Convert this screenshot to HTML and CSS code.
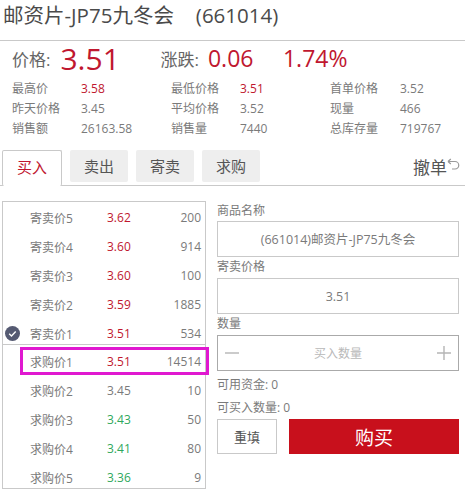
FILE: index.html
```html
<!doctype html>
<html lang="zh-CN">
 <head>
  <meta charset="UTF-8">
  <title>邮资片-JP75九冬会</title>
  <link rel="stylesheet" href="styles.css">
 </head>
 <body>
  <h1 class="title">邮资片-JP75九冬会 &nbsp; (661014)</h1>
  <div class="price-row">
   <span class="price-label">价格:</span>
   <span class="price-now">3.51</span>
   <span class="change-label">涨跌:</span>
   <span class="change-val">0.06</span>
   <span class="change-pct">1.74%</span>
  </div>
  <div class="stats">
   <span>最高价</span><span class="up">3.58</span>
   <span>最低价格</span><span class="up">3.51</span>
   <span>首单价格</span><span>3.52</span>
   <span>昨天价格</span><span>3.45</span>
   <span>平均价格</span><span>3.52</span>
   <span>现量</span><span>466</span>
   <span>销售额</span><span>26163.58</span>
   <span>销售量</span><span>7440</span>
   <span>总库存量</span><span>719767</span>
  </div>
  <div class="tabs">
   <a class="tab active">买入</a>
   <a class="tab">卖出</a>
   <a class="tab">寄卖</a>
   <a class="tab">求购</a>
   <a class="cancel">撤单<svg class="undo" width="13" height="13" viewBox="0 0 13 13"><path d="M1 3.5h7a3.6 3.6 0 0 1 0 7.5H5M1 3.5L3.8 1M1 3.5L3.8 6" fill="none" stroke="#999" stroke-width="1.2"/></svg></a>
  </div>
  <div class="trade">
   <div class="book">
    <div class="book-part sell">
     <div class="row"><span>寄卖价5</span><span class="up">3.62</span><span>200</span></div>
     <div class="row"><span>寄卖价4</span><span class="up">3.60</span><span>914</span></div>
     <div class="row"><span>寄卖价3</span><span class="up">3.60</span><span>100</span></div>
     <div class="row"><span>寄卖价2</span><span class="up">3.59</span><span>1885</span></div>
     <div class="row">
      <svg class="check" width="15" height="15" viewBox="0 0 15 15"><circle cx="7.5" cy="7.5" r="7.5" fill="#555a72"/><path d="M4.2 7.8l2.3 2.2 4.2-4.4" fill="none" stroke="#fff" stroke-width="1.4"/></svg>
      <span>寄卖价1</span><span class="up">3.51</span><span>534</span>
     </div>
    </div>
    <div class="book-part">
     <div class="row picked"><span>求购价1</span><span class="up">3.51</span><span>14514</span></div>
     <div class="row"><span>求购价2</span><span>3.45</span><span>10</span></div>
     <div class="row"><span>求购价3</span><span class="down">3.43</span><span>50</span></div>
     <div class="row"><span>求购价4</span><span class="down">3.41</span><span>80</span></div>
     <div class="row"><span>求购价5</span><span class="down">3.36</span><span>9</span></div>
    </div>
   </div>
   <form class="order">
    <label class="field-label">商品名称</label>
    <div class="field">(661014)邮资片-JP75九冬会</div>
    <label class="field-label">寄卖价格</label>
    <div class="field">3.51</div>
    <label class="field-label">数量</label>
    <div class="field qty">
     <svg width="14" height="14" viewBox="0 0 14 14"><path d="M0 7h14" stroke="#b5b5b5" stroke-width="1.4"/></svg>
     <span class="placeholder">买入数量</span>
     <svg width="14" height="14" viewBox="0 0 14 14"><path d="M0 7h14M7 0v14" stroke="#b5b5b5" stroke-width="1.4"/></svg>
    </div>
    <p class="info">可用资金: 0</p>
    <p class="info second">可买入数量: 0</p>
    <div class="actions">
     <button type="button" class="btn-reset">重填</button>
     <button type="button" class="btn-buy">购买</button>
    </div>
   </form>
  </div>
 </body>
</html>
```

FILE: styles.css
```css
:root {
  --red: #c0172f;
  --green: #2fa85c;
  --text: #7a7a7a;
  --line: #c9c9c9;
}

* {
  box-sizing: border-box;
}

body {
  margin: 0;
  font-family: "Open Sans", "Noto Sans CJK SC", sans-serif;
  color: var(--text);
  background: #fff;
  overflow: hidden;
}

.title {
  margin: 0;
  height: 41px;
  padding: 0 0 0 3px;
  border-bottom: 1px solid var(--line);
  font-size: 20.5px;
  font-weight: 400;
  word-spacing: 2px;
  line-height: 31px;
  color: #4a4a4a;
}

.price-row {
  display: flex;
  align-items: center;
  height: 34px;
  padding-left: 12px;
  color: #666;
  font-size: 17px;
}

.price-now {
  width: 100px;
  margin-left: 10px;
  font-size: 30px;
  color: var(--red);
}

.change-val,
.change-pct {
  font-size: 23px;
  color: var(--red);
}

.change-val {
  width: 75px;
  margin-left: 9px;
}

.stats {
  display: grid;
  grid-template-columns: 69px 90px 69px 90px 70px 1fr;
  grid-auto-rows: 20px;
  align-items: center;
  margin-top: 3px;
  padding-left: 12px;
  font-size: 12px;
}

.up {
  color: var(--red);
}

.down {
  color: var(--green);
}

.tabs {
  display: flex;
  align-items: flex-start;
  gap: 8px;
  height: 36px;
  margin-top: 12px;
  padding-left: 2px;
  border-bottom: 1px solid var(--line);
}

.tab {
  width: 58px;
  height: 32px;
  border-radius: 2px;
  background: #eee;
  color: #555;
  font-size: 15px;
  line-height: 33px;
  text-align: center;
}

.tab.active {
  width: 60px;
  height: 36px;
  background: #fff;
  border: 1px solid var(--line);
  border-bottom: 0;
  color: var(--red);
}

.cancel {
  display: flex;
  align-items: center;
  gap: 0;
  height: 32px;
  margin-left: auto;
  padding-right: 5px;
  color: #555;
  font-size: 17px;
}

.undo {
  margin-top: -4px;
}

.trade {
  display: flex;
  align-items: flex-start;
  gap: 11px;
  margin-top: 15px;
  padding-left: 2px;
}

.book {
  width: 204px;
  height: 288px;
  border: 1px solid var(--line);
  font-size: 12px;
}

.book-part {
  display: flex;
  flex-direction: column;
  gap: 9px;
  padding-top: 6px;
}

.book-part.sell {
  height: 143px;
  padding-top: 5px;
  border-bottom: 1px solid var(--line);
}

.row {
  position: relative;
  display: grid;
  grid-template-columns: 77px 1fr auto;
  align-items: center;
  height: 20px;
  margin: 0 0 0 21px;
  padding: 1px 4px 0 6px;
}

.picked {
  outline: 3px solid #e018d0;
  outline-offset: 1px;
}

.check {
  position: absolute;
  left: -19px;
  top: 3px;
}

.order {
  width: 242px;
}

.field-label {
  display: block;
  height: 21px;
  font-size: 12px;
  line-height: 20px;
}

.field {
  height: 36px;
  border: 1px solid var(--line);
  font-size: 12.5px;
  line-height: 35px;
  text-align: center;
}

.order > .field-label:first-child {
  height: 20px;
}

.qty {
  display: flex;
  align-items: center;
  justify-content: space-between;
  padding: 0 7px;
  border-color: #aaa;
  font-size: 12px;
}

.placeholder {
  color: #b9b9b9;
}

.info {
  margin: 4px 0 0;
  font-size: 12px;
  line-height: 20px;
}

.info.second {
  margin-top: 3px;
}

.actions {
  display: flex;
  justify-content: space-between;
  margin-top: 1px;
}

.actions button {
  height: 35px;
  border: 1px solid var(--line);
  border-radius: 0;
  font-family: inherit;
}

.btn-reset {
  width: 60px;
  background: #fff;
  color: #555;
  font-size: 13px;
}

.btn-buy {
  width: 170px;
  background: #c8101c;
  border-color: #c8101c !important;
  color: #fff;
  font-size: 19px;
}
```
